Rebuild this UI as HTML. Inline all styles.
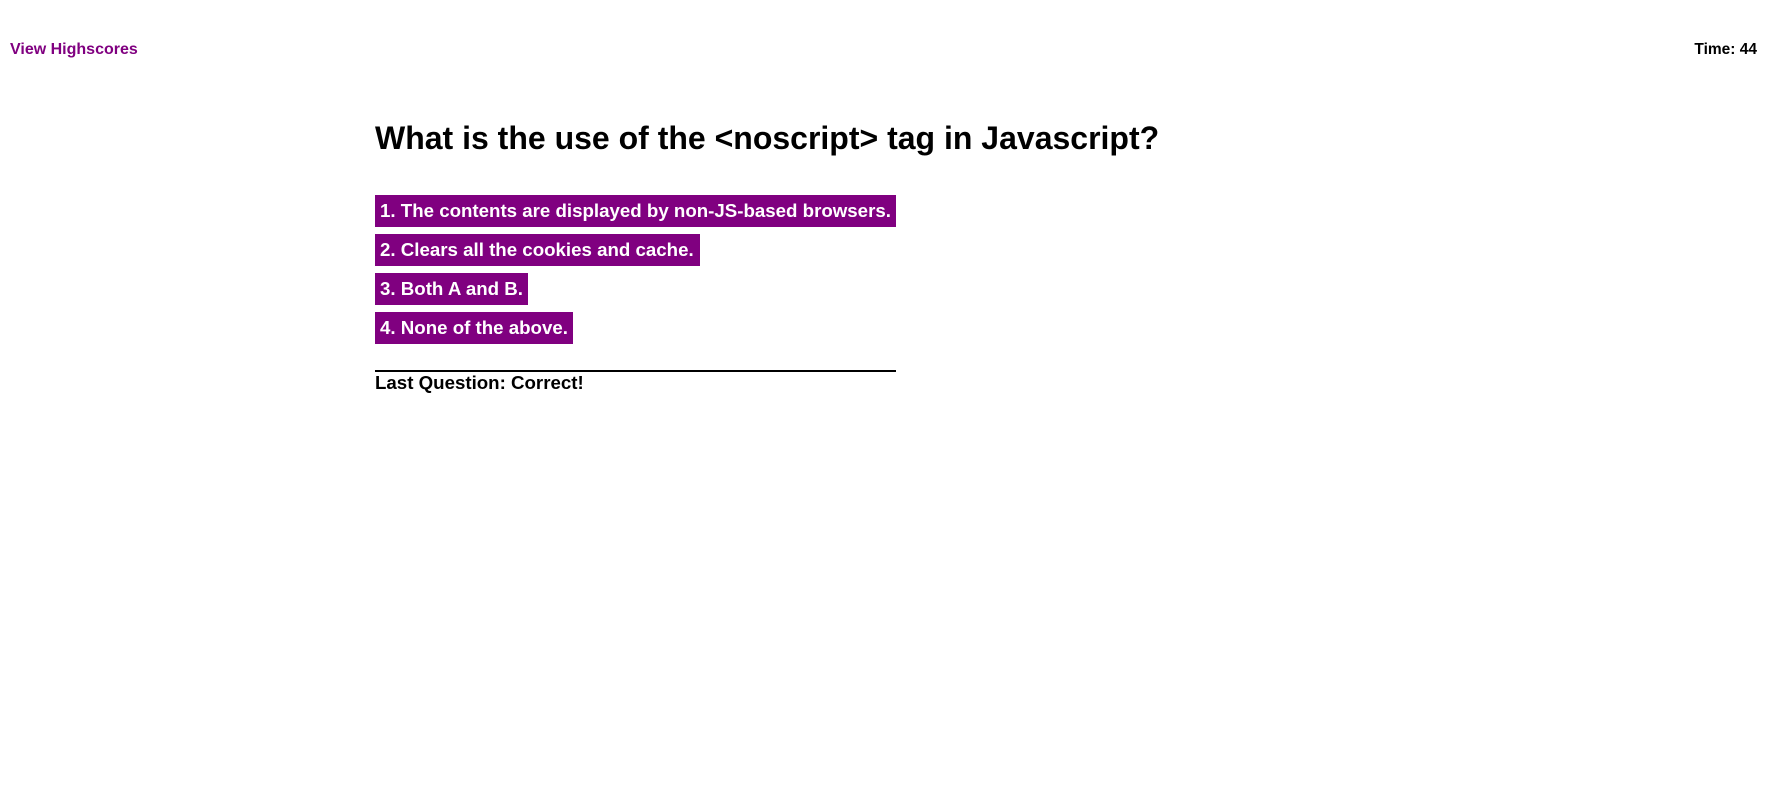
<!DOCTYPE html>
<html><head><style>
body{margin:0;background:#fff;font-family:"Liberation Sans",Arial,sans-serif;width:1769px;height:799px;position:relative;overflow:hidden}
.hs{position:absolute;left:10px;top:41px;font-size:16px;font-weight:bold;color:#800080}
.tm{position:absolute;right:12px;top:41px;font-size:15.5px;font-weight:bold;color:#000}
h1{position:absolute;left:375px;top:118px;margin:0;font-size:32px;font-weight:bold;line-height:40px}
.b{position:absolute;left:375px;height:32px;line-height:32px;background:#800080;color:#fff;font-size:18.7px;font-weight:bold;padding:0 5px;box-sizing:border-box;white-space:nowrap}
.ln{position:absolute;left:375px;top:370px;width:521px;height:2px;background:#000}
.lq{position:absolute;left:375px;top:372px;font-size:18.7px;font-weight:bold;line-height:22px}
</style></head><body>
<div class="hs">View Highscores</div>
<div class="tm">Time: 44</div>
<h1>What is the use of the &lt;noscript&gt; tag in Javascript?</h1>
<div class="b" style="top:195px;width:521px">1. The contents are displayed by non-JS-based browsers.</div>
<div class="b" style="top:234px;width:325px">2. Clears all the cookies and cache.</div>
<div class="b" style="top:273px;width:153px">3. Both A and B.</div>
<div class="b" style="top:312px;width:198px">4. None of the above.</div>
<div class="ln"></div>
<div class="lq">Last Question: Correct!</div>
</body></html>
